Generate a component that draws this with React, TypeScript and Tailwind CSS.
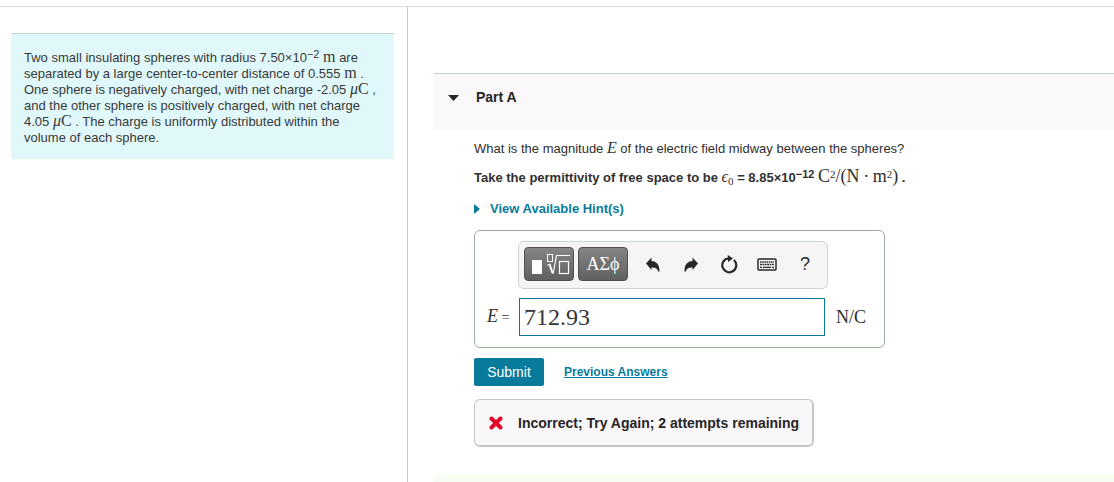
import { useState } from "react";
import type { ReactNode } from "react";

// ─── Math text ────────────────────────────────────────────

function Tex({ children, italic = false }: { children: ReactNode; italic?: boolean }) {
  return (
    <span
      className={
        italic
          ? "font-['Liberation_Serif',serif] text-[16px] leading-[0] font-normal italic"
          : "font-['Liberation_Serif',serif] text-[16px] leading-[0] font-normal"
      }
    >
      {children}
    </span>
  );
}

function Sup({ children }: { children: ReactNode }) {
  return <sup className="-top-1 text-[11px] leading-[0]">{children}</sup>;
}

// ─── Icons ────────────────────────────────────────────────

function UndoIcon() {
  return (
    <svg width="14" height="15" viewBox="0 0 14 15" fill="currentColor" aria-hidden="true">
      <path d="M0 6.500 5.500.5v3.400c5 .3 8.200 3.600 8 10.600H12c-.4-2.600-2.300-4-6.500-4v2.500z" />
    </svg>
  );
}

function RedoIcon() {
  return (
    <svg width="14" height="15" viewBox="0 0 14 15" fill="currentColor" aria-hidden="true">
      <path d="M14 6.500 8.500.5v3.400c-5 .3-8.200 3.600-8 10.600H2c.4-2.600 2.300-4 6.500-4v2.500z" />
    </svg>
  );
}

function ResetIcon() {
  return (
    <svg width="18" height="19" viewBox="0 0 18 19" aria-hidden="true">
      <path d="M13.900 5A7 7 0 1 1 8.500 3.300" fill="none" stroke="currentColor" strokeWidth="2.200" />
      <path d="M7.800 0 13 3.500 8 7z" fill="currentColor" />
    </svg>
  );
}

function KeyboardIcon() {
  return (
    <svg width="20" height="13" viewBox="0 0 20 13" fill="none" stroke="currentColor" aria-hidden="true">
      <rect x="1" y="1" width="18" height="11" rx="1" strokeWidth="1.500" />
      <path d="M3 4h14" strokeWidth="1.500" strokeDasharray="1.500 .7" />
      <path d="M3 6.500h14" strokeWidth="1.500" strokeDasharray="1.800 .6" />
      <path d="M3 9.300h2M6 9.300h8M15 9.300h2" strokeWidth="1.300" />
    </svg>
  );
}

function TemplatesIcon() {
  return (
    <svg width="48" height="32" viewBox="1 1 48 32" fill="none" stroke="white" aria-hidden="true">
      <rect x="8" y="13" width="10" height="14" fill="white" stroke="none" />
      <rect x="23.500" y="7.500" width="5" height="7" />
      <path d="M23 18.500l2.500-1.500" />
      <path d="M25.500 17l3 9" strokeWidth="2" />
      <path d="M29 27l3.500-18.500H46" strokeWidth="1.200" />
      <rect x="35.500" y="14.500" width="9" height="12" strokeWidth="1.200" />
    </svg>
  );
}

function WrongIcon() {
  return (
    <svg width="14" height="14" viewBox="0 0 14 14" aria-hidden="true">
      <path d="M2.500 2.500l9 9M11.500 2.500l-9 9" stroke="#e00525" strokeWidth="4" strokeLinecap="round" />
    </svg>
  );
}

// ─── Toolbar ──────────────────────────────────────────────

const TOOLS: { label: string; icon: ReactNode }[] = [
  { label: "Undo", icon: <UndoIcon /> },
  { label: "Redo", icon: <RedoIcon /> },
  { label: "Reset", icon: <ResetIcon /> },
  { label: "Keyboard shortcuts", icon: <KeyboardIcon /> },
  { label: "Help", icon: <span className="text-[18px]">?</span> },
];

const darkButton =
  "flex h-[34px] w-[50px] items-center justify-center rounded-[4px] border border-[#505050] bg-linear-to-b from-[#858585] to-[#606060] text-white";

function MathToolbar() {
  return (
    <div className="flex h-12 items-start rounded-[6px] border border-[#ccd5cc] bg-[#f5f5f5] pt-[5px] pl-[5px]">
      <button type="button" aria-label="Templates" className={darkButton}>
        <TemplatesIcon />
      </button>
      <button
        type="button"
        aria-label="Symbols"
        className={`${darkButton} ml-1 font-['Liberation_Serif',serif] text-[18px]`}
      >
        ΑΣϕ
      </button>
      <div className="ml-[6px] flex">
        {TOOLS.map((tool) => (
          <button
            key={tool.label}
            type="button"
            aria-label={tool.label}
            className="flex h-[34px] w-[38px] items-center justify-center text-[#282828]"
          >
            {tool.icon}
          </button>
        ))}
      </div>
    </div>
  );
}

// ─── Page ─────────────────────────────────────────────────

function ProblemIntro() {
  return (
    <aside className="w-[408px] shrink-0 border-r border-[#c3ccc9] pt-[26px] pr-[13px] pl-[11px]">
      <p className="border-t border-[#c6d2d2] bg-[#e1f8fa] px-[13px] pt-4 pb-[13px] leading-4 text-[#383838]">
        Two small insulating spheres with radius 7.50×10<Sup>−2</Sup> <Tex>m</Tex> are separated by a large
        center-to-center distance of 0.555&nbsp;<Tex>m</Tex>&nbsp;. One sphere is negatively charged, with net
        charge -2.05&nbsp;<Tex><i>μ</i>C</Tex>&nbsp;, and the other sphere is positively charged, with net charge
        4.05&nbsp;<Tex><i>μ</i>C</Tex>&nbsp;. The charge is uniformly distributed within the volume of each sphere.
      </p>
    </aside>
  );
}

function AnswerBox() {
  const [answer, setAnswer] = useState("712.93");

  return (
    <div className="mt-[13px] w-[411px] rounded-[6px] border border-[#9dac9d] pt-[10px] pb-[11px] pl-3">
      <div className="ml-[31px] w-[310px]">
        <MathToolbar />
      </div>
      <div className="mt-[9px] flex items-center">
        <label htmlFor="answer" className="w-8 font-['Liberation_Serif',serif] text-[14px] whitespace-nowrap">
          <i className="text-[18px]">E</i> =
        </label>
        <input
          id="answer"
          value={answer}
          onChange={(e) => setAnswer(e.target.value)}
          className="h-[38px] w-[306px] border border-[#0b7698] bg-white px-1 font-['Liberation_Serif',serif] text-[24px] text-[#353535] outline-none"
        />
        <span className="ml-[11px] font-['Liberation_Serif',serif] text-[18px]">N/C</span>
      </div>
    </div>
  );
}

export default function App() {
  return (
    <div className="flex min-h-screen flex-col bg-white pt-[6px] font-['Liberation_Sans',Arial,sans-serif] text-[13px] text-[#303030]">
      <div className="flex flex-1 border-t border-[#d7e5d7]">
        <ProblemIntro />

        <main className="flex min-w-0 flex-1 flex-col pt-[66px] pl-[26px]">
          <header className="flex h-[56px] items-center border-t border-[#cbd2d2] bg-[#fbf8fb] pb-[8px] pl-[14px]">
            <button type="button" className="flex items-center text-[14px] font-bold text-[#252525]">
              <svg width="11" height="6" viewBox="0 0 11 6" fill="currentColor" aria-hidden="true">
                <path d="M0 0h11L5.500 6z" />
              </svg>
              <span className="ml-[17px]">Part A</span>
            </button>
          </header>

          <section className="pt-3 pl-10 leading-4">
            <p>
              What is the magnitude <Tex italic>E</Tex> of the electric field midway between the spheres?
            </p>
            <p className="mt-[13px] font-bold">
              Take the permittivity of free space to be{" "}
              <Tex>
                <i>ϵ</i>
                <sub className="text-[11px] leading-[0]">0</sub>
              </Tex>{" "}
              = 8.85×10<Sup>−12</Sup>{" "}
              <span className="font-['Liberation_Serif',serif] text-[18px] leading-[0] font-normal">
                C<Sup>2</Sup>/(N&thinsp;·&thinsp;m<Sup>2</Sup>)
              </span>{" "}
              .
            </p>
            <button type="button" className="mt-[15px] flex h-4 items-center gap-[10px] font-bold text-[#087b9c]">
              <svg width="6" height="10" viewBox="0 0 6 10" fill="currentColor" aria-hidden="true">
                <path d="M0 0l6 5-6 5z" />
              </svg>
              View Available Hint(s)
            </button>

            <AnswerBox />

            <div className="mt-[10px] flex items-center">
              <button type="button" className="h-7 w-[70px] rounded-[2px] bg-[#087b9c] text-[14px] text-white">
                Submit
              </button>
              <a href="#previous" className="ml-5 text-[12px] font-bold text-[#087b9c] underline">
                Previous Answers
              </a>
            </div>

            <div
              role="status"
              className="mt-[13px] flex h-12 w-[340px] items-center rounded-[6px] border border-r-2 border-b-2 border-[#c6c6c6] bg-[#faf7fa] pl-[14px] text-[14px] font-bold whitespace-nowrap text-[#252525]"
            >
              <WrongIcon />
              <span className="ml-[15px]">Incorrect; Try Again; 2 attempts remaining</span>
            </div>
          </section>

          <div className="mt-[27px] min-h-2 flex-1 bg-[#f8fdf4]" />
        </main>
      </div>
    </div>
  );
}
